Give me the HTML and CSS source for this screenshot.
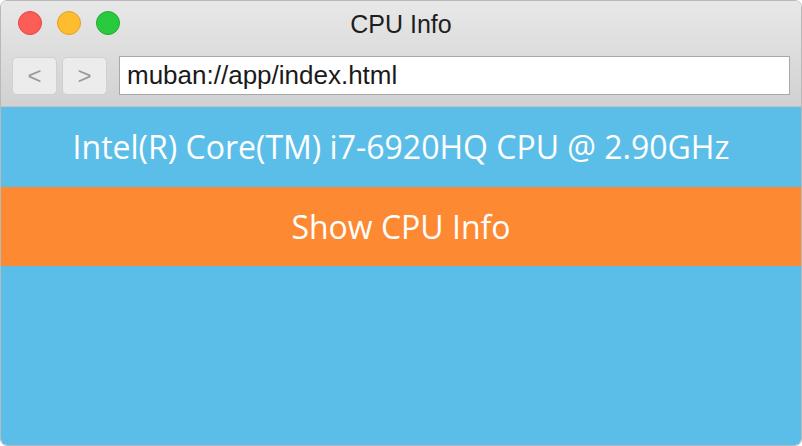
FILE: index.html
```html
<!DOCTYPE html>
<html lang="en">
<head>
    <meta charset="UTF-8">
    <title>CPU Info</title>
    <link rel="stylesheet" href="styles.css">
</head>
<body>
    <div class="window">
        <div class="chrome">
            <div class="titlebar">
                <div class="lights">
                    <span class="light close"></span>
                    <span class="light min"></span>
                    <span class="light max"></span>
                </div>
                <div class="title">CPU Info</div>
            </div>
            <div class="toolbar">
                <button class="nav">&lt;</button>
                <button class="nav">&gt;</button>
                <div class="url">muban://app/index.html</div>
            </div>
        </div>
        <div class="content">
            <div class="cpu">Intel(R) Core(TM) i7-6920HQ CPU @ 2.90GHz</div>
            <div class="show">Show CPU Info</div>
        </div>
    </div>
</body>
</html>
```
FILE: styles.css
```css
html, body {
    margin: 0;
    height: 100%;
    background: #fff;
}
.window {
    height: 446px;
    box-sizing: border-box;
    display: flex;
    flex-direction: column;
    border: 1px solid #b9b9b9;
    border-radius: 7px;
    overflow: hidden;
}
.chrome {
    background: linear-gradient(#e9e8e9, #d2d1d2);
    border-bottom: 1px solid #c4c4c4;
    height: 106px;
    box-sizing: border-box;
}
.titlebar {
    position: relative;
    height: 47px;
}
.lights {
    position: absolute;
    left: 17px;
    top: 10px;
    display: flex;
    gap: 15px;
}
.light {
    width: 24px;
    height: 24px;
    border-radius: 50%;
    box-sizing: border-box;
}
.close { background: #fd5d57; border: 1px solid #e2463f; }
.min { background: #febc2f; border: 1px solid #e0a028; }
.max { background: #29c940; border: 1px solid #1eab2c; }
.title {
    text-align: center;
    font-family: "Liberation Sans", Arial, sans-serif;
    font-size: 25px;
    line-height: 46px;
    color: #1e1e1e;
}
.toolbar {
    display: flex;
    align-items: flex-start;
    padding: 8px 11px 0;
}
.nav {
    width: 45px;
    height: 38px;
    margin: 1px 5px 0 0;
    padding: 0;
    border: 1px solid #d0d0d0;
    border-radius: 5px;
    background: #ececec;
    color: #9a9a9a;
    font-family: "Liberation Sans", Arial, sans-serif;
    font-size: 24px;
}
.url {
    flex: 1;
    margin-left: 7px;
    height: 39px;
    box-sizing: border-box;
    border: 1px solid #a8a8a8;
    background: #fff;
    padding-left: 7px;
    font-family: "Liberation Sans", Arial, sans-serif;
    font-size: 26px;
    line-height: 37px;
    color: #1a1a1a;
}
.content {
    flex: 1;
    background: #5bbee9;
    color: #fff;
    font-family: "Open Sans", sans-serif;
    text-align: center;
}
.cpu {
    height: 80px;
    line-height: 80px;
    font-size: 32px;
}
.show {
    background: #fd8a33;
    height: 79px;
    line-height: 79px;
    font-size: 32px;
}
```
